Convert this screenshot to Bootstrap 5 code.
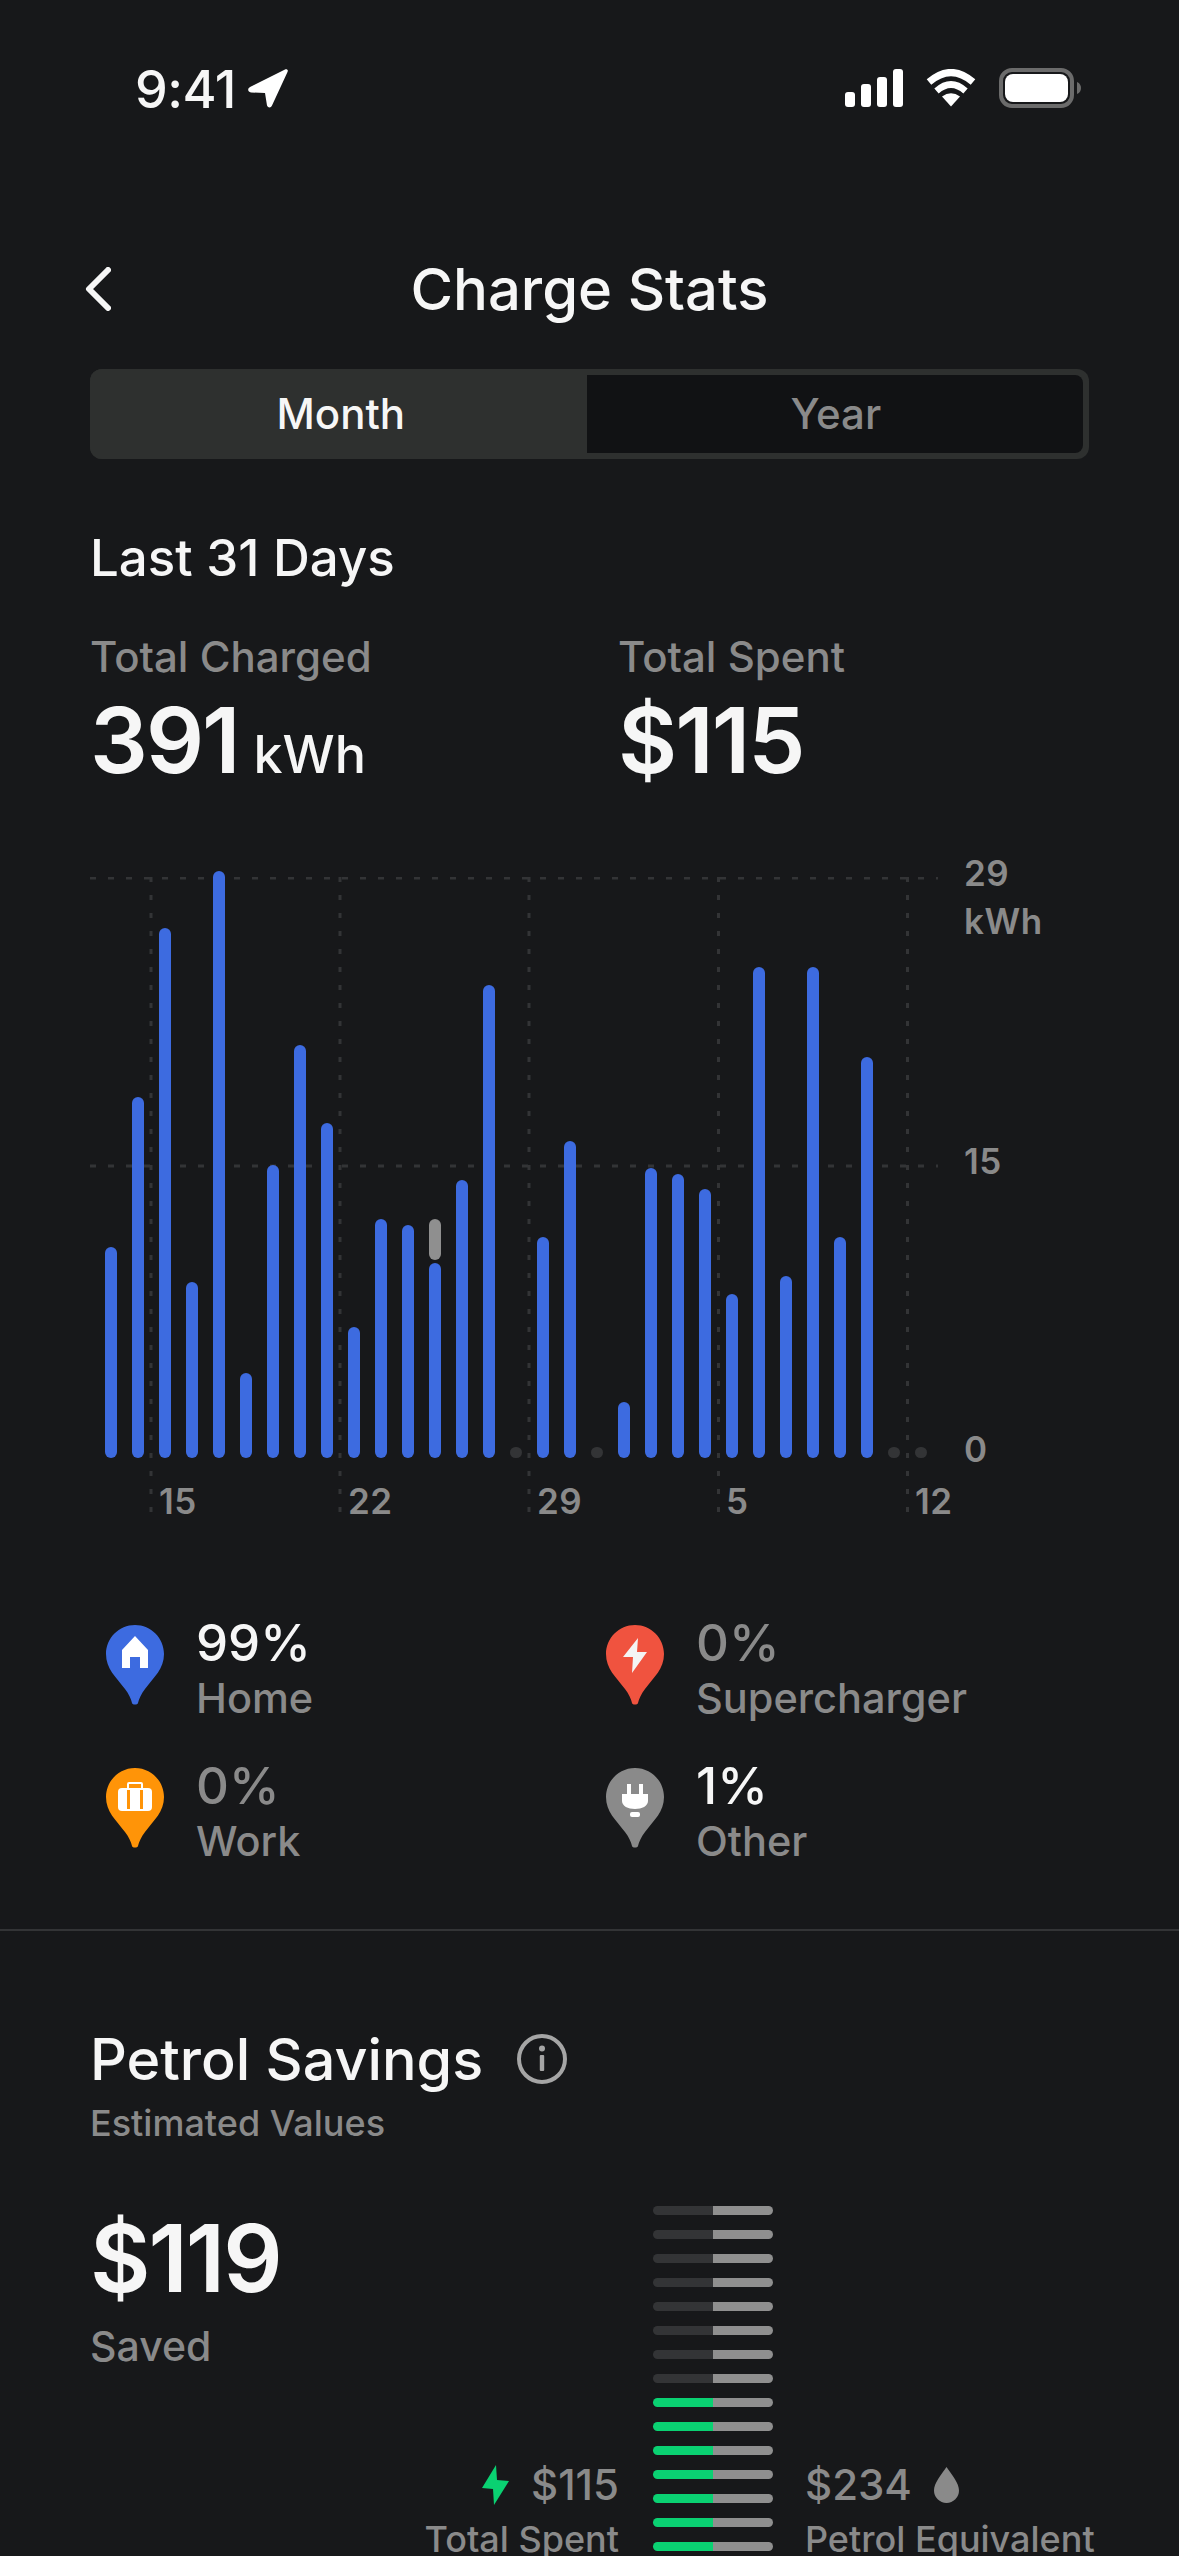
<!DOCTYPE html>
<html lang="en">
<head>
    <meta charset="UTF-8">
    <meta name="viewport" content="width=device-width, initial-scale=1.0">
    <title>Charge Stats</title>
    <link href="https://cdn.jsdelivr.net/npm/bootstrap@5.3.0/dist/css/bootstrap.min.css" rel="stylesheet">
    <style>
        html, body { height: 2556px; overflow: hidden; }
        body { background: #17181a; color: #f6f6f6; font-family: Inter, "Noto Sans", sans-serif; font-weight: 500; }
        .dim-text { color: #8a8a8a; }

        .status-strip { height: 240px; padding: 68px 98px 0 135px; }
        .status-time { font-size: 52px; line-height: 39px; letter-spacing: -.5px; padding-top: 2px; }
        .status-left { gap: 12px; }
        .status-icons { gap: 23px; }

        .page-head { height: 98px; padding: 0 85px; display: grid; grid-template-columns: 1fr auto 1fr; align-items: center; }
        .page-title { font-size: 58px; line-height: 70px; margin: 0; font-weight: 500; }

        .page-sec { padding: 0 90px; }
        .seg-box { margin-top: 31px; height: 90px; background: #2e302f; border-radius: 12px; padding: 6px 6px 6px 0; }
        .seg-btn { flex: 0 0 auto; border: 0; font-size: 42px; font-weight: 500; line-height: 1; border-radius: 0; }
        .seg-on { width: 497px; margin: -6px 0; padding: 0 0 0 4px; background: #2e302f; color: #f6f6f6; border-radius: 12px 0 0 12px; }
        .seg-off { width: 496px; padding: 0 0 0 2px; background: #111214; color: #8a8a8a; border-radius: 0 8px 8px 0 !important; }

        .range-title { margin: 69px 0 0; font-size: 51px; line-height: 60px; font-weight: 500; }
        .stat-line { margin-top: 44px; }
        .stat-col { width: 528px; }
        .stat-label { font-size: 42px; line-height: 50px; }
        .stat-big { margin-top: 8px; font-size: 91px; line-height: 100px; letter-spacing: -2px; font-weight: 600; }
        .stat-unit { font-size: 52px; letter-spacing: 0; margin-left: -6px; font-weight: 500; }

        .chart-wrap { margin-top: 48px; }
        .plot-area { position: relative; flex: none; width: 874px; padding-top: 18px; }
        .plot-grid { position: absolute; left: 0; top: 24px; }
        .bar-row { position: relative; height: 587px; padding-left: 15px; gap: 15px; }
        .day-col { width: 12px; gap: 3px; }
        .day-bar { border-radius: 6px; background: #3d6be0; }
        .day-bar.other { background: #8f8f8f; }
        .day-bar.none { height: 11px; background: #333436; }
        .axis-x { padding-left: 69px; margin-top: 23px; }
        .axis-x span { flex: 0 0 189px; }
        .axis-text { font-size: 35px; line-height: 40px; font-weight: 600; letter-spacing: .5px; color: #8a8a8a; }
        .axis-y div:nth-child(2) { margin-top: 8px; }
        .axis-y div:nth-child(3) { margin-top: 200px; }
        .axis-y div:nth-child(4) { margin-top: 248px; }

        .legend-grid { margin-top: 97px; padding-left: 16px; width: 1016px; }
        .legend-item { height: 143px; gap: 32px; }
        .legend-pin { margin-top: 7px; flex: none; }
        .legend-pct { font-size: 51px; line-height: 50px; }
        .legend-name { margin-top: 5px; font-size: 41.5px; line-height: 50px; color: #8a8a8a; }
        .sec-rule { height: 2px; margin: 25px 0 0; background: #333436; }

        .savings-title { margin-top: 93px; gap: 34px; }
        .savings-title h2 { font-size: 57.5px; line-height: 70px; margin: 0; font-weight: 500; }
        .savings-sub { margin-top: 9px; font-size: 36px; line-height: 40px; color: #8a8a8a; }
        .savings-row { margin-top: 63px; height: 348px; }
        .savings-left { flex: none; width: 529px; }
        .saved-num { margin-top: 2px; font-size: 93px; line-height: 100px; letter-spacing: -2px; font-weight: 600; }
        .saved-name { margin-top: 13px; font-size: 41px; line-height: 50px; color: #8a8a8a; }
        .compare-num { font-size: 42px; line-height: 50px; color: #8a8a8a; gap: 22px; }
        .compare-name { margin-top: 14px; font-size: 36px; line-height: 30px; color: #8a8a8a; white-space: nowrap; }
        .stack-col { flex: none; width: 120px; margin: 0 32px 0 34px; gap: 15px; }
        .stack-rung { width: 60px; height: 9px; background: #333436; border-radius: 5px 0 0 5px; }
        .stack-rung.spent { background: #0ad172; }
        .stack-rung.petrol { background: #8f8f8f; border-radius: 0 5px 5px 0; }
    </style>
</head>
<body>
    <div class="status-strip d-flex justify-content-between align-items-start">
        <div class="status-left d-flex align-items-center">
            <span class="status-time">9:41</span>
            <svg width="40" height="39" viewBox="0 0 40 39"><path d="M37 0.5 L2 18 C-1 20 0 23 3 23.5 L17 24 L19 36.5 C20 39 23 39 24 36.5 L39.5 3 C40.5 1 39 0 37 0.5Z" fill="#fff"/></svg>
        </div>
        <div class="status-icons d-flex align-items-center">
            <svg width="58" height="38" viewBox="0 0 58 38"><g fill="#fff"><rect x="0" y="23" width="10" height="15" rx="3"/><rect x="16" y="15" width="10" height="23" rx="3"/><rect x="32" y="8" width="10" height="30" rx="3"/><rect x="48" y="0" width="10" height="38" rx="3"/></g></svg>
            <svg width="50" height="38" viewBox="0 0 50 38"><path d="M3 13 Q25 -6 47 13" fill="none" stroke="#fff" stroke-width="7"/><path d="M10.5 22 Q25 9 39.5 22" fill="none" stroke="#fff" stroke-width="6.5"/><path d="M16 27.5 Q25 21 34 27.5 L25 37.5Z" fill="#fff"/></svg>
            <svg width="82" height="40" viewBox="0 0 82 40"><rect x="2" y="2" width="71" height="36" rx="11" fill="none" stroke="#6b6b6b" stroke-width="4"/><rect x="6" y="6" width="63" height="28" rx="8" fill="#fff"/><path d="M78 14 C81 15 82 18 82 20 C82 22 81 25 78 26Z" fill="#6b6b6b"/></svg>
        </div>
    </div>

    <div class="page-head">
        <svg width="26" height="44" viewBox="0 0 26 44"><path d="M23 3 L4 22 L23 41" fill="none" stroke="#f6f6f6" stroke-width="6" stroke-linecap="round" stroke-linejoin="round"/></svg>
        <h1 class="page-title">Charge Stats</h1>
        <div></div>
    </div>

    <div class="page-sec">
        <div class="seg-box btn-group d-flex" role="group">
            <button type="button" class="btn seg-btn seg-on">Month</button>
            <button type="button" class="btn seg-btn seg-off">Year</button>
        </div>

        <h2 class="range-title">Last 31 Days</h2>
        <div class="stat-line d-flex">
            <div class="stat-col">
                <div class="stat-label dim-text">Total Charged</div>
                <div class="stat-big">391 <span class="stat-unit">kWh</span></div>
            </div>
            <div>
                <div class="stat-label dim-text">Total Spent</div>
                <div class="stat-big">$115</div>
            </div>
        </div>

        <div class="chart-wrap d-flex">
            <div class="plot-area">
                <svg class="plot-grid" width="874" height="636" viewBox="0 0 874 636">
                    <g stroke="#333436" stroke-width="3" stroke-dasharray="6 12" fill="none">
                        <path d="M0 1 H848"/>
                        <path d="M0 289 H848"/>
                    </g>
                    <g stroke="#333436" stroke-width="3" stroke-dasharray="5 13" fill="none">
                        <path d="M61 0 V636"/>
                        <path d="M250 0 V636"/>
                        <path d="M439 0 V636"/>
                        <path d="M628.5 0 V636"/>
                        <path d="M817.5 0 V636"/>
                    </g>
                </svg>
                <div class="bar-row d-flex align-items-end">
                    <div class="day-col d-flex flex-column"><div class="day-bar" style="height:211px"></div></div>
                    <div class="day-col d-flex flex-column"><div class="day-bar" style="height:361px"></div></div>
                    <div class="day-col d-flex flex-column"><div class="day-bar" style="height:530px"></div></div>
                    <div class="day-col d-flex flex-column"><div class="day-bar" style="height:176px"></div></div>
                    <div class="day-col d-flex flex-column"><div class="day-bar" style="height:587px"></div></div>
                    <div class="day-col d-flex flex-column"><div class="day-bar" style="height:85px"></div></div>
                    <div class="day-col d-flex flex-column"><div class="day-bar" style="height:293px"></div></div>
                    <div class="day-col d-flex flex-column"><div class="day-bar" style="height:413px"></div></div>
                    <div class="day-col d-flex flex-column"><div class="day-bar" style="height:335px"></div></div>
                    <div class="day-col d-flex flex-column"><div class="day-bar" style="height:131px"></div></div>
                    <div class="day-col d-flex flex-column"><div class="day-bar" style="height:239px"></div></div>
                    <div class="day-col d-flex flex-column"><div class="day-bar" style="height:233px"></div></div>
                    <div class="day-col d-flex flex-column"><div class="day-bar other" style="height:41px"></div><div class="day-bar" style="height:195px"></div></div>
                    <div class="day-col d-flex flex-column"><div class="day-bar" style="height:278px"></div></div>
                    <div class="day-col d-flex flex-column"><div class="day-bar" style="height:473px"></div></div>
                    <div class="day-col d-flex flex-column"><div class="day-bar none"></div></div>
                    <div class="day-col d-flex flex-column"><div class="day-bar" style="height:221px"></div></div>
                    <div class="day-col d-flex flex-column"><div class="day-bar" style="height:317px"></div></div>
                    <div class="day-col d-flex flex-column"><div class="day-bar none"></div></div>
                    <div class="day-col d-flex flex-column"><div class="day-bar" style="height:56px"></div></div>
                    <div class="day-col d-flex flex-column"><div class="day-bar" style="height:290px"></div></div>
                    <div class="day-col d-flex flex-column"><div class="day-bar" style="height:284px"></div></div>
                    <div class="day-col d-flex flex-column"><div class="day-bar" style="height:269px"></div></div>
                    <div class="day-col d-flex flex-column"><div class="day-bar" style="height:164px"></div></div>
                    <div class="day-col d-flex flex-column"><div class="day-bar" style="height:491px"></div></div>
                    <div class="day-col d-flex flex-column"><div class="day-bar" style="height:182px"></div></div>
                    <div class="day-col d-flex flex-column"><div class="day-bar" style="height:491px"></div></div>
                    <div class="day-col d-flex flex-column"><div class="day-bar" style="height:221px"></div></div>
                    <div class="day-col d-flex flex-column"><div class="day-bar" style="height:401px"></div></div>
                    <div class="day-col d-flex flex-column"><div class="day-bar none"></div></div>
                    <div class="day-col d-flex flex-column"><div class="day-bar none"></div></div>
                </div>
                <div class="axis-x d-flex axis-text">
                    <span>15</span><span>22</span><span>29</span><span>5</span><span>12</span>
                </div>
            </div>
            <div class="axis-y axis-text">
                <div>29</div>
                <div>kWh</div>
                <div>15</div>
                <div>0</div>
            </div>
        </div>

        <div class="legend-grid row g-0">
            <div class="col-6 legend-item d-flex">
                <svg class="legend-pin" width="58" height="80" viewBox="0 0 58 80"><path d="M29 0 C45 0 58 13 58 29 C58 44 48 52 39 64 C35 69 33 74 32 78 C31.5 80 26.5 80 26 78 C25 74 23 69 19 64 C10 52 0 44 0 29 C0 13 13 0 29 0Z" fill="#3d6be0"/><path d="M29 11 L42 25 V43 H34 V32 H24 V43 H16 V25Z" fill="#fff"/></svg>
                <div><div class="legend-pct">99%</div><div class="legend-name">Home</div></div>
            </div>
            <div class="col-6 legend-item d-flex">
                <svg class="legend-pin" width="58" height="80" viewBox="0 0 58 80"><path d="M29 0 C45 0 58 13 58 29 C58 44 48 52 39 64 C35 69 33 74 32 78 C31.5 80 26.5 80 26 78 C25 74 23 69 19 64 C10 52 0 44 0 29 C0 13 13 0 29 0Z" fill="#f0533f"/><path d="M32 13 L17 32 H27 L26 48 L41 27 H31Z" fill="#f4f4f4"/></svg>
                <div><div class="legend-pct dim-text">0%</div><div class="legend-name">Supercharger</div></div>
            </div>
            <div class="col-6 legend-item d-flex">
                <svg class="legend-pin" width="58" height="80" viewBox="0 0 58 80"><path d="M29 0 C45 0 58 13 58 29 C58 44 48 52 39 64 C35 69 33 74 32 78 C31.5 80 26.5 80 26 78 C25 74 23 69 19 64 C10 52 0 44 0 29 C0 13 13 0 29 0Z" fill="#ff9408"/><rect x="12" y="20" width="34" height="23" rx="4" fill="#fff"/><path d="M22 20 V16 Q22 15 23 15 H35 Q36 15 36 16 V20" fill="none" stroke="#fff" stroke-width="2"/><path d="M22.5 22 V41 M35.5 22 V41" stroke="#ff9408" stroke-width="3"/></svg>
                <div><div class="legend-pct dim-text">0%</div><div class="legend-name">Work</div></div>
            </div>
            <div class="col-6 legend-item d-flex">
                <svg class="legend-pin" width="58" height="80" viewBox="0 0 58 80"><path d="M29 0 C45 0 58 13 58 29 C58 44 48 52 39 64 C35 69 33 74 32 78 C31.5 80 26.5 80 26 78 C25 74 23 69 19 64 C10 52 0 44 0 29 C0 13 13 0 29 0Z" fill="#8a8a8a"/><path d="M21 16 H25 V26 H33 V16 H37 V26 H42 V33 C42 38 36 41 29 41 C22 41 16 38 16 33 V26 H21Z" fill="#fff"/><rect x="24" y="44" width="10" height="5" rx="2" fill="#fff"/></svg>
                <div><div class="legend-pct">1%</div><div class="legend-name">Other</div></div>
            </div>
        </div>
    </div>

    <div class="sec-rule"></div>

    <div class="page-sec">
        <div class="savings-title d-flex align-items-center">
            <h2>Petrol Savings</h2>
            <svg width="50" height="50" viewBox="0 0 50 50"><circle cx="25" cy="25" r="23" fill="none" stroke="#a5a5a5" stroke-width="4"/><circle cx="25" cy="14.5" r="3" fill="#a5a5a5"/><rect x="22.8" y="21" width="4.4" height="16" rx="1" fill="#a5a5a5"/></svg>
        </div>
        <div class="savings-sub">Estimated Values</div>

        <div class="savings-row d-flex">
            <div class="savings-left d-flex flex-column justify-content-between">
                <div>
                    <div class="saved-num">$119</div>
                    <div class="saved-name">Saved</div>
                </div>
                <div class="text-end">
                    <div class="compare-num d-flex justify-content-end align-items-center">
                        <svg width="27" height="40" viewBox="0 0 27 40"><path d="M14 0 L0 23 L11 24 L12 40 L27 16 L15 15Z" fill="#0ad172"/></svg>
                        <span>$115</span>
                    </div>
                    <div class="compare-name">Total Spent</div>
                </div>
            </div>
            <div class="stack-col d-flex flex-column">
                <div class="d-flex"><div class="stack-rung"></div><div class="stack-rung petrol"></div></div>
                <div class="d-flex"><div class="stack-rung"></div><div class="stack-rung petrol"></div></div>
                <div class="d-flex"><div class="stack-rung"></div><div class="stack-rung petrol"></div></div>
                <div class="d-flex"><div class="stack-rung"></div><div class="stack-rung petrol"></div></div>
                <div class="d-flex"><div class="stack-rung"></div><div class="stack-rung petrol"></div></div>
                <div class="d-flex"><div class="stack-rung"></div><div class="stack-rung petrol"></div></div>
                <div class="d-flex"><div class="stack-rung"></div><div class="stack-rung petrol"></div></div>
                <div class="d-flex"><div class="stack-rung"></div><div class="stack-rung petrol"></div></div>
                <div class="d-flex"><div class="stack-rung spent"></div><div class="stack-rung petrol"></div></div>
                <div class="d-flex"><div class="stack-rung spent"></div><div class="stack-rung petrol"></div></div>
                <div class="d-flex"><div class="stack-rung spent"></div><div class="stack-rung petrol"></div></div>
                <div class="d-flex"><div class="stack-rung spent"></div><div class="stack-rung petrol"></div></div>
                <div class="d-flex"><div class="stack-rung spent"></div><div class="stack-rung petrol"></div></div>
                <div class="d-flex"><div class="stack-rung spent"></div><div class="stack-rung petrol"></div></div>
                <div class="d-flex"><div class="stack-rung spent"></div><div class="stack-rung petrol"></div></div>
            </div>
            <div class="d-flex flex-column justify-content-end">
                <div class="compare-num d-flex align-items-center">
                    <span>$234</span>
                    <svg width="25" height="36" viewBox="0 0 25 36"><path d="M12.5 0 C18 8 25 16 25 23.5 A12.5 12.5 0 0 1 0 23.5 C0 16 7 8 12.5 0Z" fill="#8a8a8a"/></svg>
                </div>
                <div class="compare-name">Petrol Equivalent</div>
            </div>
        </div>
    </div>

    <script src="https://cdn.jsdelivr.net/npm/bootstrap@5.3.0/dist/js/bootstrap.bundle.min.js"></script>
</body>
</html>
